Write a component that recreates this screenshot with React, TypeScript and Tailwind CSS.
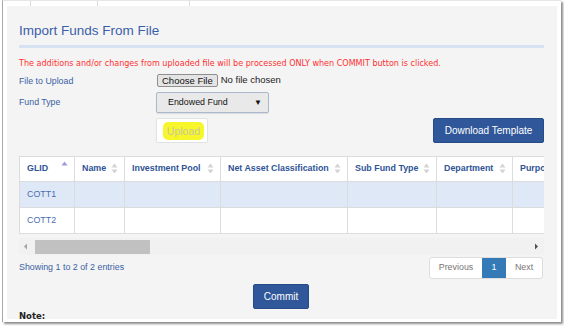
import React from "react";

const SortBoth = () => (
  <svg width="7" height="11" viewBox="0 0 7 11" className="shrink-0">
    <path d="M3.5 0.5 L6.5 4.5 L0.5 4.5 Z" fill="#d4d4d4" />
    <path d="M3.5 10.5 L6.5 6.5 L0.5 6.5 Z" fill="#d4d4d4" />
  </svg>
);

const SortAsc = () => (
  <svg width="7" height="11" viewBox="0 0 7 11" className="shrink-0">
    <path d="M3.5 0.5 L6.5 4.5 L0.5 4.5 Z" fill="#9c9ce0" />
  </svg>
);

const cols: { label: string; w: number; asc?: boolean }[] = [
  { label: "GLID", w: 55, asc: true },
  { label: "Name", w: 50 },
  { label: "Investment Pool", w: 96 },
  { label: "Net Asset Classification", w: 127 },
  { label: "Sub Fund Type", w: 89 },
  { label: "Department", w: 76 },
  { label: "Purpose", w: 90 },
];

export default function App() {
  return (
    <div className="w-[564px] h-[328px] bg-white overflow-hidden" style={{ fontFamily: '"Liberation Sans", Arial, sans-serif' }}>
      <div className="ml-[2px] w-[559px] h-[322px] bg-white border-l border-l-[#a8a8a8] border-t border-t-[#e6e6e6] shadow-[2px_2px_2px_rgba(0,0,0,0.45)] flex flex-col pl-[4px] pr-[4px] pb-[3px]">
        {/* tab strip */}
        <div className="h-[5px] flex shrink-0">
          <div className="ml-[23px] w-[68px] border-l border-r border-[#dcdcdc]" />
          <div className="w-[92px] border-r border-[#dcdcdc]" />
        </div>
        {/* gray panel */}
        <div className="flex-1 min-h-0 bg-[#f4f4f4] pl-[12px] pr-[13px] overflow-hidden flex flex-col">
          <div className="shrink-0 pt-[16px] h-[34px] text-[13.5px] leading-[18px] text-[#3b5ea8]">Import Funds From File</div>
          <div className="shrink-0 mt-[5px] h-[3px] bg-[#d6e1f1]" />
          <div className="shrink-0 mt-[10px] h-[12px] leading-[12px] text-[8.05px] text-[#ff3030] whitespace-nowrap" style={{ fontFamily: '"DejaVu Sans", Verdana, sans-serif' }}>
            The additions and/or changes from uploaded file will be processed ONLY when COMMIT button is clicked.
          </div>
          {/* file row */}
          <div className="shrink-0 mt-[4px] h-[13px] flex items-center">
            <div className="w-[138px] text-[8.8px] text-[#3a5fa5] pt-[2px]">File to Upload</div>
            <div className="h-[13px] px-[4px] bg-[#e4e4e4] border border-[#8f8f8f] rounded-[2px] text-[9.5px] leading-[11px] text-[#111]">Choose File</div>
            <div className="ml-[3px] text-[9.5px] text-[#222]">No file chosen</div>
          </div>
          {/* fund type */}
          <div className="shrink-0 mt-[5px] h-[21px] flex items-center">
            <div className="w-[137px] text-[8.8px] text-[#3a5fa5]">Fund Type</div>
            <div className="w-[113px] h-[21px] bg-[#e9e9e9] border border-[#a9b8cc] rounded-[2px] shadow-[0_1px_1px_rgba(0,0,0,0.1)] flex items-center pl-[11px] pr-[6px] text-[8.9px] text-[#111]">
              <span className="flex-1">Endowed Fund</span>
              <span className="text-[8px]">▼</span>
            </div>
          </div>
          {/* buttons */}
          <div className="shrink-0 mt-[5px] h-[25px] flex items-center">
            <div className="ml-[137px] w-[52px] h-[25px] bg-white border border-[#e2e2e2] rounded-[2px] flex items-center justify-center">
              <span className="bg-[#f6f62a] rounded-[5px] px-[4px] h-[18px] leading-[18px] text-[10.5px] text-[#c9c99a] -mr-[3px]">Upload</span>
            </div>
            <div className="flex-1" />
            <div className="w-[111px] h-[25px] bg-[#2f5799] border border-[#264b86] rounded-[2px] flex items-center justify-center text-[10px] text-white">Download Template</div>
          </div>
          {/* table */}
          <div className="mt-[13px] w-[525px] overflow-hidden shrink-0">
            <table className="border-collapse table-fixed" style={{ width: 583 }}>
              <colgroup>
                {cols.map((c) => (
                  <col key={c.label} style={{ width: c.w }} />
                ))}
              </colgroup>
              <thead>
                <tr className="h-[25px] bg-white">
                  {cols.map((c) => (
                    <th key={c.label} className="border border-[#dcdcdc] p-0 text-left">
                      <div className="flex items-center pl-[7px] pr-[6px] text-[8.9px] font-bold text-[#2f5496] whitespace-nowrap">
                        <span className="flex-1 overflow-hidden">{c.label}</span>
                        {c.asc ? <div className="-mt-[4px]"><SortAsc /></div> : <SortBoth />}
                      </div>
                    </th>
                  ))}
                </tr>
              </thead>
              <tbody>
                {["COTT1", "COTT2"].map((g, i) => (
                  <tr key={g} className={i === 0 ? "h-[26px] bg-[#dfe8f6]" : "h-[26px] bg-white"}>
                    {cols.map((c, j) => (
                      <td key={c.label} className="border border-[#dcdcdc] pl-[7px] text-[8.9px] text-[#4a6db0]">
                        {j === 0 ? g : ""}
                      </td>
                    ))}
                  </tr>
                ))}
              </tbody>
            </table>
          </div>
          {/* scrollbar */}
          <div className="shrink-0 mt-[4px] h-[17px] bg-[#f1f1f1] flex items-center">
            <svg width="16" height="17" viewBox="0 0 16 17" className="shrink-0">
              <path d="M5 8.5 L8 5.5 L8 11.5 Z" fill="#a3a3a3" />
            </svg>
            <div className="h-[14px] w-[115px] bg-[#c1c1c1]" />
            <div className="flex-1" />
            <svg width="16" height="17" viewBox="0 0 16 17" className="shrink-0">
              <path d="M10 8.5 L7 5.5 L7 11.5 Z" fill="#505050" />
            </svg>
          </div>
          {/* info + pagination */}
          <div className="shrink-0 mt-[2px] h-[22px] flex items-center">
            <div className="text-[8.9px] text-[#3a5fa5]">Showing 1 to 2 of 2 entries</div>
            <div className="flex-1" />
            <div className="mr-[1px] h-[22px] flex bg-white border border-[#dddddd] rounded-[3px] overflow-hidden text-[8.9px]">
              <div className="w-[52px] flex items-center justify-center text-[#777]">Previous</div>
              <div className="w-[24px] flex items-center justify-center bg-[#337ab7] text-white">1</div>
              <div className="w-[36px] flex items-center justify-center text-[#777]">Next</div>
            </div>
          </div>
          {/* commit */}
          <div className="shrink-0 mt-[5px] h-[25px] flex justify-center">
            <div className="ml-[-1px] w-[56px] h-[25px] bg-[#2f5799] border border-[#264b86] rounded-[2px] flex items-center justify-center text-[10px] text-white">Commit</div>
          </div>
          <div className="shrink-0 mt-[1px] text-[8.5px] leading-[12px] font-bold underline text-[#222]" style={{ fontFamily: '"DejaVu Sans", Verdana, sans-serif' }}>Note:</div>
        </div>
      </div>
    </div>
  );
}
